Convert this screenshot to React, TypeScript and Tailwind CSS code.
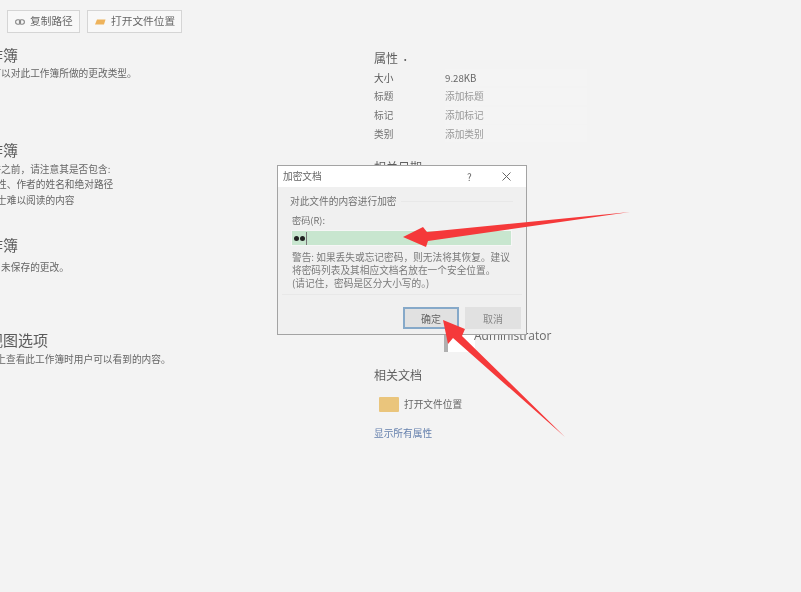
import React from "react";

const FONT = "font-['Noto_Sans_CJK_SC','Noto_Sans',sans-serif]";

function Section({ title, lines, gap }: { title: string; lines: { text: string; indent?: boolean }[]; gap: string }) {
  return (
    <section className="h-[95px]">
      <h2 className="h-[22px] text-[15px] leading-[22px] font-normal text-[#5a5a5a]">{title}</h2>
      <div className={gap}>
        {lines.map((l) => (
          <p key={l.text} className={`h-[15.5px] text-[9.7px] leading-[15.5px] whitespace-nowrap text-[#666] ${l.indent ? "pl-[25px]" : ""}`}>
            {l.text}
          </p>
        ))}
      </div>
    </section>
  );
}

function Prop({ label, value, dark }: { label: string; value: string; dark?: boolean }) {
  return (
    <div className="flex h-[18.7px] items-center">
      <span className={`w-[71px] text-[9.7px] ${dark ? "text-[#555]" : "text-[#707070]"}`}>{label}</span>
      <span className={`flex h-[17px] w-[142px] items-center bg-[#f4f4f4] text-[9.7px] ${dark ? "text-[#666]" : "text-[#999]"}`}>{value}</span>
    </div>
  );
}

export default function App() {
  return (
    <div className={`relative h-[592px] w-[801px] overflow-hidden bg-[#f3f3f3] ${FONT}`}>
      <div className="flex h-full blur-[0.35px]">
        {/* left column: starts off-page, as in the reference */}
        <div className="ml-[-57px] w-[431px] shrink-0">
          <div className="flex gap-[7px] pl-[64px] pt-[10px]">
            <div className="flex h-[23px] w-[73px] items-center gap-[5px] border border-[#d5d5d5] bg-[#f8f8f8] pl-[7px] text-[10.7px] text-[#666]">
              <svg width="10" height="6" viewBox="0 0 10 6" fill="none" stroke="#888" strokeWidth="1.1">
                <rect x="0.6" y="0.8" width="5" height="4.4" rx="2.2" />
                <rect x="4.4" y="0.8" width="5" height="4.4" rx="2.2" />
              </svg>
              复制路径
            </div>
            <div className="flex h-[23px] w-[95px] items-center gap-[5px] border border-[#d5d5d5] bg-[#f8f8f8] pl-[7px] text-[10.7px] text-[#666]">
              <svg width="11" height="7" viewBox="0 0 11 7">
                <path d="M2 1.5h8.5L9 6.5H0z" fill="#eeb35c" />
              </svg>
              打开文件位置
            </div>
          </div>
          <div className="pt-[11px]">
            <Section title="保护工作簿" gap="mt-0" lines={[{ text: "控制其他人可以对此工作簿所做的更改类型。" }]} />
            <Section
              title="检查工作簿"
              gap="mt-[0.5px]"
              lines={[
                { text: "在发布此文件之前，请注意其是否包含:" },
                { text: "文档属性、作者的姓名和绝对路径", indent: true },
                { text: "残障人士难以阅读的内容", indent: true },
              ]}
            />
            <Section title="管理工作簿" gap="mt-[4px]" lines={[{ text: "检查并关闭了未保存的更改。" }]} />
            <Section title="浏览器视图选项" gap="mt-[1px]" lines={[{ text: "选择在 Web 上查看此工作簿时用户可以看到的内容。" }]} />
          </div>
        </div>

        {/* right column */}
        <div className="w-[240px] shrink-0 pt-[48px]">
          <h3 className="h-[20px] text-[12px] leading-[20px] font-normal text-[#5f5f5f]">属性 <span className="text-[9px]">·</span></h3>
          <div className="pt-[0.5px]">
            <Prop label="大小" value="9.28KB" dark />
            <Prop label="标题" value="添加标题" />
            <Prop label="标记" value="添加标记" />
            <Prop label="类别" value="添加类别" />
          </div>
          <h3 className="mt-[14px] h-[20px] text-[12px] leading-[20px] font-normal text-[#5f5f5f]">相关日期</h3>
          <div className="mt-[157px] flex h-[20px] items-start pl-[70px]">
            <div className="h-[18px] w-[31px] border-l-[4px] border-[#b0b0b0] bg-white" />
            <span className="ml-[-1px] mt-[-6px] font-['Open_Sans',sans-serif] text-[12px] leading-[16px] text-[#6a6a6a]">Administrator</span>
          </div>
          <h3 className="mt-[11px] h-[20px] text-[12px] leading-[20px] font-normal text-[#5f5f5f]">相关文档</h3>
          <div className="mt-[12px] flex h-[15px] items-center gap-[5px] pl-[5px]">
            <div className="h-[15px] w-[20px] rounded-[1px] bg-[#eac57c]" />
            <span className="text-[9.7px] text-[#666]">打开文件位置</span>
          </div>
          <p className="mt-[14px] text-[9.7px] leading-[14px] text-[#6580ad]">显示所有属性</p>
        </div>
      </div>

      {/* modal dialog */}
      <div className="absolute left-[277px] top-[165px] h-[170px] w-[250px] border border-[#a3a3a3] bg-[#f0f0f0] blur-[0.35px]">
        <div className="flex h-[21px] items-center bg-white pl-[5px] text-[9.7px] text-[#666]">
          <span className="flex-1">加密文档</span>
          <span className="w-[35px] text-[10px] text-[#666]">?</span>
          <svg className="mr-[15px]" width="9" height="9" viewBox="0 0 9 9" stroke="#666" strokeWidth="1">
            <path d="M0.5 0.5l8 8M8.5 0.5l-8 8" />
          </svg>
        </div>
        <div className="mx-[4px] mt-[8px] h-[100px] border-b border-[#e8e8e8] px-[9px]">
          <div className="flex h-[12px] items-center">
            <span className="ml-[-1px] text-[9.7px] text-[#707070]">对此文件的内容进行加密</span>
            <div className="ml-[4px] h-px flex-1 bg-[#e8e8e8]" />
          </div>
          <p className="mt-[7px] h-[12px] pl-[1px] text-[9.2px] leading-[12px] text-[#707070]">密码(R):</p>
          <div className="mt-[4px] flex h-[16px] w-[221px] items-center border border-[#f6f6f6] bg-[#c8e6cf] pl-[2px]">
            <span className="h-[5px] w-[5px] rounded-full bg-[#222]" />
            <span className="ml-[1px] h-[5px] w-[5px] rounded-full bg-[#222]" />
            <span className="ml-[0.5px] h-[13px] w-px bg-[#777]" />
          </div>
          <p className="mt-[5px] whitespace-nowrap pl-[1px] text-[9.7px] leading-[13px] text-[#7a7a7a]">
            警告: 如果丢失或忘记密码，则无法将其恢复。建议
            <br />
            将密码列表及其相应文档名放在一个安全位置。
            <br />
            (请记住，密码是区分大小写的。)
          </p>
        </div>
        <div className="mt-[12px] flex justify-end gap-[6px] pr-[5px]">
          <button className="h-[22px] w-[56px] border-2 border-[#86a9c9] bg-[#e1e1e1] text-[10px] text-[#666]">确定</button>
          <button className="h-[22px] w-[56px] bg-[#e1e1e1] text-[10px] text-[#888]">取消</button>
        </div>
      </div>

      {/* annotation arrows */}
      <svg className="absolute left-0 top-0" width="801" height="592" viewBox="0 0 801 592" fill="#f5393a">
        <path d="M403 237 423 227 427 232 630 212 428 241 426 247Z" />
        <path d="M443 320 465 329 462 336 565 437 453 338 448 344Z" />
      </svg>
    </div>
  );
}
